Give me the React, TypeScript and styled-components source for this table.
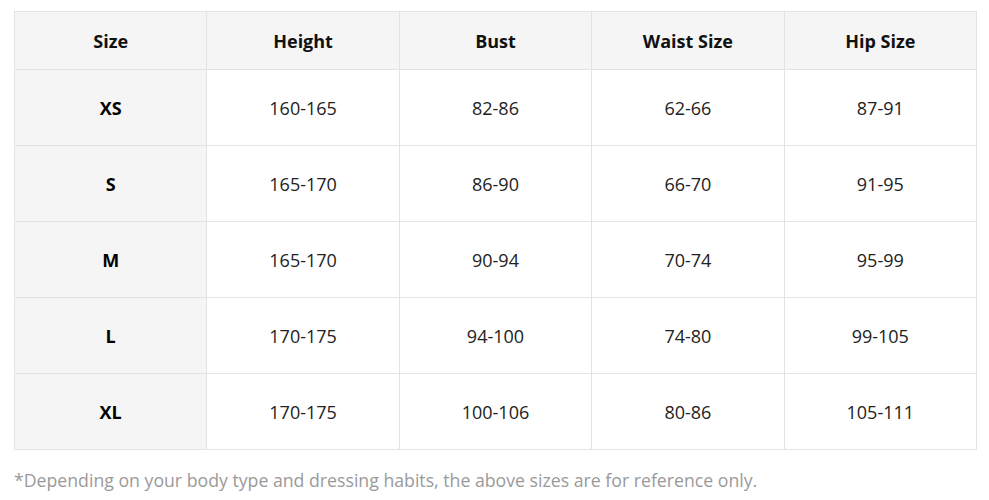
import React from 'react';
import styled, { createGlobalStyle } from 'styled-components';

const GlobalStyle = createGlobalStyle`
  body {
    margin: 0;
    background: #fff;
    font-family: "Open Sans", "Noto Sans", "Liberation Sans", sans-serif;
    color: #111;
  }
`;

const Wrapper = styled.div`
  padding: 11px 13px 0 14px;
`;

const Table = styled.table`
  width: 963px;
  border-collapse: collapse;
  table-layout: fixed;
`;

const HeadCell = styled.th`
  height: 57px;
  padding: 0;
  background: #f5f5f5;
  border: 1px solid #e3e3e3;
  font-size: 18px;
  font-weight: 700;
  text-align: center;
`;

const Cell = styled.td<{ $label?: boolean }>`
  height: 75px;
  padding: 0;
  border: 1px solid #e3e3e3;
  background: ${p => (p.$label ? '#f5f5f5' : '#fff')};
  font-size: 18px;
  font-weight: ${p => (p.$label ? 700 : 400)};
  text-align: center;
  color: ${p => (p.$label ? '#000' : '#222')};
`;

const Note = styled.p`
  margin: 18px 0 0;
  font-size: 17.7px;
  color: #9a9a9a;
`;

const headers = ['Size', 'Height', 'Bust', 'Waist Size', 'Hip Size'];

const rows = [
  ['XS', '160-165', '82-86', '62-66', '87-91'],
  ['S', '165-170', '86-90', '66-70', '91-95'],
  ['M', '165-170', '90-94', '70-74', '95-99'],
  ['L', '170-175', '94-100', '74-80', '99-105'],
  ['XL', '170-175', '100-106', '80-86', '105-111'],
];

const App: React.FC = () => {
  return (
    <Wrapper>
      <GlobalStyle />
      <Table>
        <thead>
          <tr>
            {headers.map(h => (
              <HeadCell key={h}>{h}</HeadCell>
            ))}
          </tr>
        </thead>
        <tbody>
          {rows.map(row => (
            <tr key={row[0]}>
              {row.map((v, i) => (
                <Cell key={i} $label={i === 0}>
                  {v}
                </Cell>
              ))}
            </tr>
          ))}
        </tbody>
      </Table>
      <Note>*Depending on your body type and dressing habits, the above sizes are for reference only.</Note>
    </Wrapper>
  );
};

export default App;
